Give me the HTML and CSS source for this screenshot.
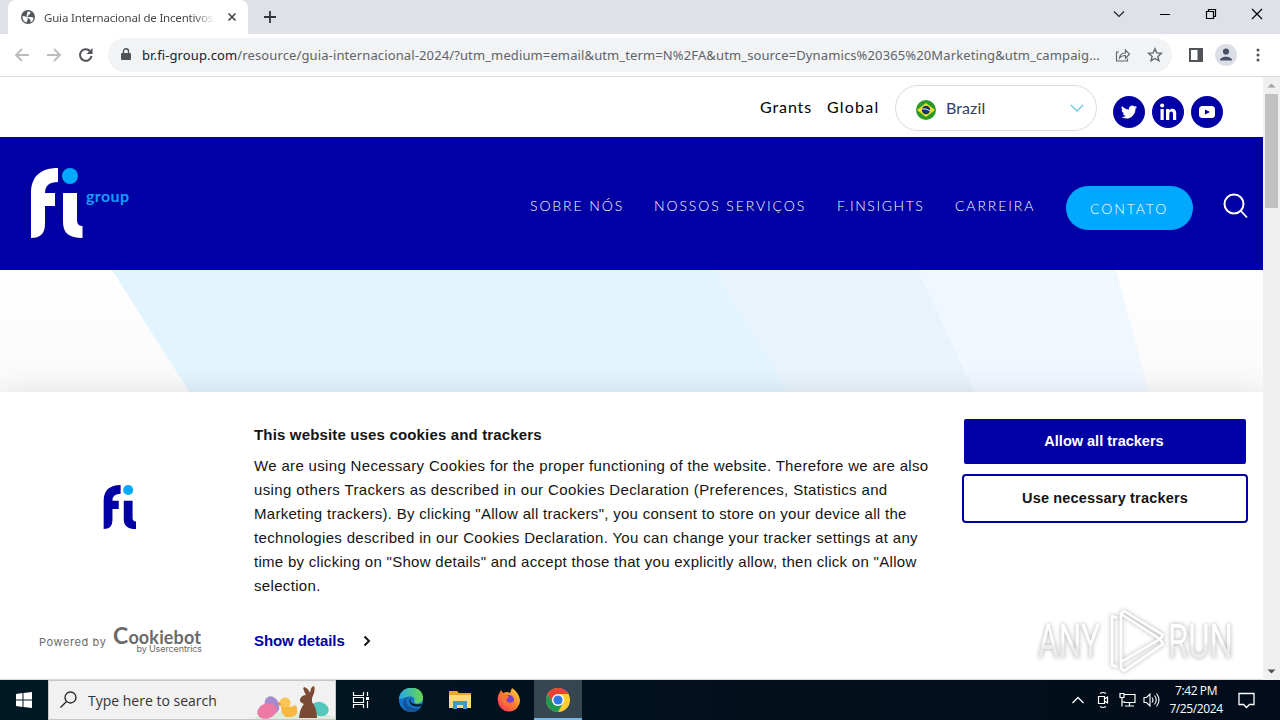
FILE: index.html
```html
<!DOCTYPE html>
<html lang="pt">
<head>
    <meta charset="UTF-8">
    <meta name="viewport" content="width=device-width, initial-scale=1.0">
    <title>Guia Internacional de Incentivos</title>
    <link rel="stylesheet" href="styles.css">
</head>
<body>
    <!-- Browser tabs -->
    <div class="tabstrip">
        <div class="tab">
            <svg class="globe" width="14" height="14" viewBox="0 0 14 14"><circle cx="7" cy="7" r="7" fill="#53575b"/><path d="M1.500 6l3 .5L7 8l-.5 2-1 2.500C3 12 1.500 10 1.500 6zM6.500 1.500l3 .5-.5 2-1.500 1-1 2H10l2.500.5C12.500 10 11 12 9.500 12.300L9.500 10 8 8.500 5.500 6.500z" fill="#fff"/></svg>
            <span class="tab-title">Guia Internacional de Incentivos</span>
            <svg width="10" height="10" viewBox="0 0 10 10"><path d="M1.500 1.500l7 7m0-7l-7 7" stroke="#45494d" stroke-width="1.700"/></svg>
        </div>
        <svg class="new-tab" width="12" height="12" viewBox="0 0 12 12"><path d="M6 0v12M0 6h12" stroke="#30343a" stroke-width="1.800"/></svg>
        <div class="window-buttons">
            <svg width="12" height="12" viewBox="0 0 12 12"><path d="M1 3.500l5 5 5-5" fill="none" stroke="#222" stroke-width="1.200"/></svg>
            <svg width="12" height="12" viewBox="0 0 12 12"><path d="M1 6.500h10" stroke="#000"/></svg>
            <svg width="12" height="12" viewBox="0 0 12 12"><path d="M1.500 3.500h7v7h-7zM3.500 3.500v-2h7v7h-2" fill="none" stroke="#000" stroke-width="1.200"/></svg>
            <svg width="12" height="12" viewBox="0 0 12 12"><path d="M1 1l10 10M11 1L1 11" stroke="#000" stroke-width="1.200"/></svg>
        </div>
    </div>

    <!-- Address bar -->
    <div class="toolbar">
        <div class="nav-buttons">
            <svg width="16" height="16" viewBox="0 0 16 16"><path d="M15 8H2m6-6L2 8l6 6" fill="none" stroke="#b9bbbd" stroke-width="1.800"/></svg>
            <svg width="16" height="16" viewBox="0 0 16 16"><path d="M1 8h13M8 2l6 6-6 6" fill="none" stroke="#b9bbbd" stroke-width="1.800"/></svg>
            <svg width="16" height="16" viewBox="0 0 16 16"><path d="M13.500 9A5.800 5.800 0 1 1 12 4" fill="none" stroke="#505458" stroke-width="2"/><path d="M14.500 1v6h-6z" fill="#505458"/></svg>
        </div>
        <div class="omnibox">
            <svg width="10" height="13" viewBox="0 0 10 13"><path d="M1 5h8q1 0 1 1v5q0 1-1 1H1q-1 0-1-1V6q0-1 1-1z" fill="#505458"/><path d="M2.500 5V3.200a2.500 2.500 0 0 1 5 0V5" fill="none" stroke="#505458" stroke-width="1.400"/></svg>
            <span class="url"><b>br.fi-group.com</b>/resource/guia-internacional-2024/?utm_medium=email&amp;utm_term=N%2FA&amp;utm_source=Dynamics%20365%20Marketing&amp;utm_campaig...</span>
            <svg width="16" height="16" viewBox="0 0 16 16"><path d="M4 5H1.500v9h11V11.500M4.500 11c.5-4 3-5 6-5V3l4 4.200-4 4V8.500c-3 0-4.500.5-6 2.500z" fill="none" stroke="#64686c" stroke-width="1.200"/></svg>
            <svg width="16" height="16" viewBox="0 0 16 16"><path d="M8 1.800l1.800 4.100 4.600.4-3.500 3.100 1 4.500L8 11.500l-3.900 2.400 1-4.500-3.500-3.100 4.600-.4z" fill="none" stroke="#64686c" stroke-width="1.400"/></svg>
        </div>
        <div class="tool-buttons">
            <svg width="14" height="14" viewBox="0 0 14 14"><path d="M1 1h12v12H1z" fill="none" stroke="#505458" stroke-width="2"/><path d="M8.500 1H13v12H8.500z" fill="#505458"/></svg>
            <svg width="22" height="22" viewBox="0 0 22 22"><circle cx="11" cy="11" r="11" fill="#dcdee6"/><circle cx="11" cy="7.500" r="3.100" fill="#4b5069"/><path d="M5 16.500c0-5 12-5 12 0z" fill="#4b5069"/></svg>
            <svg width="4" height="14" viewBox="0 0 4 14" fill="#505458"><circle cx="2" cy="2" r="1.500"/><circle cx="2" cy="7" r="1.500"/><circle cx="2" cy="12" r="1.500"/></svg>
        </div>
    </div>

    <div class="viewport">
        <div class="page">
            <div class="topbar">
                <a class="grants">Grants</a>
                <a class="global">Global</a>
                <div class="country">
                    <svg width="20" height="20" viewBox="0 0 20 20"><circle cx="10" cy="10" r="10" fill="#2b9b28"/><path d="M10 3l9 7-9 7-9-7z" fill="#f0df2f"/><circle cx="10" cy="10" r="4.200" fill="#18346f"/><path d="M6 9q4-1 8 2" fill="none" stroke="#e9f0ef"/></svg>
                    <span>Brazil</span>
                    <svg width="14" height="8" viewBox="0 0 14 8"><path d="M1 1l6 6 6-6" fill="none" stroke="#6fc6eb" stroke-width="1.400"/></svg>
                </div>
                <div class="social">
                    <svg width="32" height="32" viewBox="0 0 32 32"><circle cx="16" cy="16" r="16" fill="#0000a4"/><g transform="translate(8 8) scale(.67)"><path d="M23.950 4.570a10 10 0 0 1-2.820.78 4.960 4.960 0 0 0 2.160-2.730 9.900 9.900 0 0 1-3.130 1.190 4.920 4.920 0 0 0-8.390 4.490A13.970 13.970 0 0 1 1.640 3.160a4.920 4.920 0 0 0 1.520 6.570 4.900 4.900 0 0 1-2.230-.61v.06a4.920 4.920 0 0 0 3.950 4.830 5 5 0 0 1-2.220.08 4.940 4.940 0 0 0 4.600 3.420A9.870 9.870 0 0 1 0 19.540a13.940 13.940 0 0 0 7.550 2.210c9.050 0 14-7.500 14-13.980 0-.21 0-.42-.02-.63a9.940 9.940 0 0 0 2.420-2.570z" fill="#fff"/></g></svg>
                    <svg width="32" height="32" viewBox="0 0 32 32"><circle cx="16" cy="16" r="16" fill="#0000a4"/><path d="M8.500 13h3.200v11H8.500zM14 13h3.200v1.600c1.500-2.800 7-2.500 7 2.400v7H21v-6c0-3.400-3.700-3-3.700 0v6H14z" fill="#fff"/><circle cx="10.100" cy="9.500" r="2" fill="#fff"/></svg>
                    <svg width="32" height="32" viewBox="0 0 32 32"><circle cx="16" cy="16" r="16" fill="#0000a4"/><rect x="8" y="10" width="16" height="12" rx="3.500" fill="#fff"/><path d="M14 13.500v5l5-2.500z" fill="#0000a4"/></svg>
                </div>
            </div>

            <div class="header">
                <div class="brand">
                    <svg width="52" height="70" viewBox="0 0 52 70"><path d="M0 70V25C0 8 10 0 27 0v14q-13 0-13 11h10v13H14v18q0 14-14 14zM32 25h14v27q0 6 5.500 6v12C38 70 32 65 32 54z" fill="#fff"/><circle cx="39" cy="8" r="8" fill="#00a8ff"/></svg>
                    <span>group</span>
                </div>
                <div class="menu">
                    <a class="m1">SOBRE NÓS</a>
                    <a class="m2">NOSSOS SERVIÇOS</a>
                    <a class="m3">F.INSIGHTS</a>
                    <a class="m4">CARREIRA</a>
                    <a class="contact"><span>CONTATO</span></a>
                    <svg width="26" height="26" viewBox="0 0 26 26"><circle cx="11" cy="11" r="9.500" fill="none" stroke="#fff" stroke-width="2"/><path d="M18 18l6 6.500" stroke="#fff" stroke-width="1.800"/></svg>
                </div>
            </div>

            <div class="hero">
                <svg width="1263" height="123" viewBox="0 0 1263 123"><path d="M112 0h602l75 123H190z" fill="#e2f4fe"/><path d="M714 0h204l57 123H789z" fill="#e8f3fc"/><path d="M918 0h198l33 123H975z" fill="#f0f7fe"/></svg>
            </div>

            <!-- Cookie banner -->
            <div class="cookies">
                <div class="cookie-left">
                    <svg class="cookie-logo" width="34" height="44" viewBox="0 0 52 70"><path d="M0 70V25C0 8 10 0 27 0v14q-13 0-13 11h10v13H14v18q0 14-14 14zM32 25h14v27q0 6 5.500 6v12C38 70 32 65 32 54z" fill="#0000a4"/><circle cx="39" cy="8" r="8" fill="#00a8ff"/></svg>
                    <div class="powered">
                        <span>Powered by</span>
                        <div class="cookiebot"><strong><i>C</i>ookiebot</strong><small>by Usercentrics</small></div>
                    </div>
                </div>
                <div class="cookie-text">
                    <h2>This website uses cookies and trackers</h2>
                    <p>
                        <span class="l1">We are using Necessary Cookies for the proper functioning of the website. Therefore we are also</span>
                        <span class="l2">using others Trackers as described in our Cookies Declaration (Preferences, Statistics and</span>
                        <span class="l3">Marketing trackers). By clicking "Allow all trackers", you consent to store on your device all the</span>
                        <span class="l4">technologies described in our Cookies Declaration. You can change your tracker settings at any</span>
                        <span class="l5">time by clicking on "Show details" and accept those that you explicitly allow, then click on "Allow</span>
                        <span class="l6">selection.</span>
                    </p>
                    <a class="details">Show details <svg width="8" height="12" viewBox="0 0 8 12"><path d="M1.500 1.500L6 6l-4.500 4.500" fill="none" stroke="#141414" stroke-width="2"/></svg></a>
                </div>
                <div class="cookie-buttons">
                    <button class="allow">Allow all trackers</button>
                    <button class="necessary">Use necessary trackers</button>
                </div>
            </div>
        </div>
        <div class="scrollbar">
            <svg width="17" height="17" viewBox="0 0 17 17"><path d="M4.500 10.500l4-4 4 4z" fill="#a3a3a3"/></svg>
            <div class="thumb"></div>
            <svg class="down" width="17" height="17" viewBox="0 0 17 17"><path d="M4.500 6.500l4 4 4-4z" fill="#505050"/></svg>
        </div>
    </div>

    <!-- Windows taskbar -->
    <div class="taskbar">
        <div class="start"><svg width="16" height="16" viewBox="0 0 16 16" fill="#fff"><path d="M0 2l6.500-1v6.500H0zM7.500 1L16 0v7.500H7.500zM0 8.500h6.500V15L0 14zM7.500 8.500H16V16l-8.500-1z"/></svg></div>
        <div class="search">
            <svg width="18" height="18" viewBox="0 0 18 18"><circle cx="10.500" cy="6.500" r="5.500" fill="none" stroke="#222" stroke-width="1.300"/><path d="M6.500 10.500L.5 16.500" stroke="#222" stroke-width="1.300"/></svg>
            <span>Type here to search</span>
            <svg class="easter" width="80" height="38" viewBox="0 0 80 38">
                <path d="M0 36q38-12 80 0v2H0z" fill="#dcebdc"/>
                <ellipse cx="17" cy="24" rx="7" ry="9" fill="#a58bd0" transform="rotate(-25 17 24)"/>
                <ellipse cx="12" cy="30" rx="10" ry="7.500" fill="#ed79a5" transform="rotate(-18 12 30)"/>
                <circle cx="30" cy="22" r="5.500" fill="#fac653"/><path d="M26 25q6 3 15-1 4 11-5 12-10 2-10-11z" fill="#f8b83f"/><path d="M25 21l-3 2 4 1.500z" fill="#ec8437"/>
                <ellipse cx="65" cy="28" rx="9" ry="7" fill="#53c8bd" transform="rotate(20 65 28)"/>
                <path d="M51 14Q47 7 49 6q4 1 6 6 1-7 4-7 2 4-2 12l0 4q5 6 5 16H44q1-10 5-14-5-2-4-5 2-4 6-4z" fill="#7a4a35"/>
            </svg>
        </div>
        <div class="apps">
            <div class="app"><svg width="18" height="18" viewBox="0 0 18 18"><path d="M1.500 1v3.500h10V1M1.500 17v-3.500h10V17M1.500 6.500h10v5h-10zM15.500 1v4M15.500 10v7" fill="none" stroke="#fff" stroke-width="1.200"/><path d="M14 6h3v3h-3z" fill="#fff"/></svg></div>
            <div class="app"><svg width="24" height="24" viewBox="0 0 24 24">
                <defs><linearGradient id="edge" x1="0" x2="1"><stop offset="0" stop-color="#24a8e8"/><stop offset="1" stop-color="#6bd94b"/></linearGradient></defs>
                <circle cx="12" cy="12" r="12" fill="#1674c8"/><path d="M0 11C1-4 24-4 24 10c0 6-8 7-9 4 2-5-3-7-7-5-4 1-7 2-8 2z" fill="url(#edge)"/><path d="M9 9c-5 5 0 13 13 11-6 6-15 5-17-1-2-5 0-9 4-10z" fill="#12539d"/><path d="M12 10c-2 3 0 8 11 6l-1 2c-4 1-9 1-11-3-1-2-1-4 1-5z" fill="#001823"/></svg></div>
            <div class="app"><svg width="22" height="20" viewBox="0 0 22 20"><path d="M0 1h8l2 2h12v15H0z" fill="#e9a929"/><path d="M0 5h22v13H0z" fill="#fbdc79"/><path d="M4 11h14v8h-4v-4H8v4H4z" fill="#3e99cf"/></svg></div>
            <div class="app"><svg width="24" height="24" viewBox="0 0 24 24">
                <defs><linearGradient id="fox" x1="1" y1="0" x2="0" y2="1"><stop offset="0" stop-color="#ffe03d"/><stop offset=".5" stop-color="#ff7b2d"/><stop offset="1" stop-color="#f32c65"/></linearGradient></defs>
                <path d="M2 6l2-4 2 3q4-2 7 0l2-5q7 5 8 12a11 11 0 0 1-22 1q-1-4 1-7z" fill="url(#fox)"/><circle cx="12" cy="12" r="5" fill="#7541c8"/><path d="M5 8q5-2 7 1l-3 3q3 5 8 1-1 6-7 5-6-2-5-10z" fill="#ff7134"/></svg></div>
            <div class="app active"><svg width="24" height="24" viewBox="0 0 24 24"><circle cx="12" cy="12" r="12" fill="#ffcd34"/><path d="M1.600 6A12 12 0 0 1 22.400 6H12L7 15z" fill="#ea4335"/><path d="M1.600 6A12 12 0 0 0 12 24l5.200-9L7 15z" fill="#219653"/><circle cx="12" cy="12" r="6" fill="#fff"/><circle cx="12" cy="12" r="4.600" fill="#2e77e5"/></svg></div>
        </div>
        <div class="tray">
            <svg width="12" height="8" viewBox="0 0 12 8"><path d="M.5 7L6 1.500 11.500 7" fill="none" stroke="#fff" stroke-width="1.300"/></svg>
            <svg width="12" height="18" viewBox="0 0 12 18"><path d="M1.500 5.500h6v7h-6zM7.500 8l3-2v6l-3-2M3 2.500q3-2 6 0M3 15.500q3 2 6 0" fill="none" stroke="#fff" stroke-width="1.200"/></svg>
            <svg width="17" height="16" viewBox="0 0 17 16"><path d="M5 2.500h11v8H5M1 1.500h4v4H1zM3 5.500v9M3 10h3M10.500 10.500v3M6 14h9" fill="none" stroke="#fff" stroke-width="1.200"/></svg>
            <svg width="17" height="16" viewBox="0 0 17 16"><path d="M1 5.500h2.500L7 2v12l-3.500-3.500H1zM9 5.500q2 2.500 0 5M11.500 3.500q3.500 4.500 0 9M13.500 1.500q5 6.500 0 13" fill="none" stroke="#fff" stroke-width="1.100"/></svg>
            <div class="clock"><span>7:42 PM</span><span>7/25/2024</span></div>
            <svg width="17" height="17" viewBox="0 0 17 17"><path d="M1 1.500h15v11h-4.500l-3 3-3-3H1z" fill="none" stroke="#fff" stroke-width="1.300"/></svg>
        </div>
    </div>

    <svg class="watermark" width="204" height="72" viewBox="0 0 204 72">
        <defs><linearGradient id="shade" x1="0" y1="0" x2="0" y2="1"><stop offset=".5" stop-color="#fff"/><stop offset=".6" stop-color="#ececec"/></linearGradient></defs>
        <g class="mark-text" fill="url(#shade)"><text x="4" y="54" textLength="62" lengthAdjust="spacingAndGlyphs">ANY</text><text x="134" y="54" textLength="65" lengthAdjust="spacingAndGlyphs">RUN</text></g>
        <path class="mark-icon" d="M87 10v48l39-23zM83 14l-5-2v49l5 2M87 10l3-3 39 24-3 4M87 58v6l3 3 39-27-3-5"/>
    </svg>
</body>
</html>
```
FILE: styles.css
```css
* {
    box-sizing: border-box;
}

body {
    margin: 0;
    width: 1280px;
    height: 720px;
    overflow: hidden;
    background-color: #fff;
    font-family: "Liberation Sans", Arial, sans-serif;
    display: flex;
    flex-direction: column;
}

svg {
    display: block;
    flex-shrink: 0;
}

span, a {
    white-space: nowrap;
}

/* Browser */
.tabstrip {
    height: 34px;
    flex-shrink: 0;
    padding-left: 8px;
    background-color: #dee1e7;
    display: flex;
}

.tab {
    width: 240px;
    padding: 0 11px 0 13px;
    background-color: #fff;
    border-radius: 8px 8px 0 0;
    display: flex;
    align-items: center;
}

.tab-title {
    width: 171px;
    margin: 0 12px 0 9px;
    overflow: hidden;
    font-family: "Noto Sans", sans-serif;
    font-size: 11.5px;
    letter-spacing: -.18px;
    color: #45484c;
    -webkit-mask-image: linear-gradient(90deg, #000 150px, transparent);
}

.new-tab {
    margin: 11px 0 0 16px;
}

.window-buttons {
    margin: 8px 17px 0 auto;
    display: flex;
    gap: 34px;
}

.toolbar {
    height: 43px;
    flex-shrink: 0;
    border-bottom: 1px solid #d9dadc;
    padding: 0 20px 1px 14px;
    display: flex;
    align-items: center;
}

.nav-buttons {
    width: 94px;
    display: flex;
    gap: 16px;
}

.omnibox {
    width: 1064px;
    height: 34px;
    padding: 0 10px 0 13px;
    border-radius: 17px;
    background-color: #f1f3f4;
    display: flex;
    align-items: center;
    gap: 16px;
}

.url {
    width: 962px;
    margin: 0 -1px 0 -5px;
    font-family: "Noto Sans", sans-serif;
    font-size: 13px;
    letter-spacing: .12px;
    color: #5f6368;
}

.url b {
    font-weight: normal;
    color: #202124;
}

.tool-buttons {
    margin-left: auto;
    display: flex;
    align-items: center;
    gap: 14px;
}

.tool-buttons svg:first-child {
    margin-right: -2px;
}

.tool-buttons svg:last-child {
    margin-left: 5px;
}

.viewport {
    height: 603px;
    display: flex;
}

.page {
    width: 1263px;
    display: flex;
    flex-direction: column;
}

/* Site header */
.topbar {
    height: 60px;
    padding: 8px 40px 0 760px;
    display: flex;
    align-items: flex-start;
    font-family: Lato, sans-serif;
    font-size: 16px;
    line-height: 44px;
}

.grants {
    width: 67px;
    letter-spacing: .9px;
}

.global {
    width: 68px;
    letter-spacing: 1.2px;
}

.country {
    width: 202px;
    height: 46px;
    padding: 3px 12px 0 20px;
    border: 1px solid #ddd8e4;
    border-radius: 23px;
    color: #34405a;
    display: flex;
    align-items: center;
}

.country span {
    width: 124px;
    margin: -3px 0 0 10px;
    letter-spacing: .1px;
}

.country svg:last-child {
    margin: -3px 0 0;
}

.social {
    margin: 11px 0 0 16px;
    display: flex;
    gap: 7px;
}

.header {
    height: 133px;
    background-color: #0000a4;
    color: #fff;
    display: flex;
    justify-content: space-between;
}

.brand {
    padding: 31px 0 0 31px;
    display: flex;
}

.brand span {
    margin: 17px 0 0 3px;
    color: #149dff;
    font-family: Lato, sans-serif;
    font-size: 16px;
    font-weight: bold;
    letter-spacing: .4px;
    line-height: 22px;
}

.menu {
    width: 733px;
    height: 44px;
    margin-top: 49px;
    display: flex;
    font-family: Lato, sans-serif;
    font-size: 14px;
    font-weight: 300;
    letter-spacing: 1.9px;
    line-height: 40px;
}

.m1 {
    width: 124px;
}

.m2 {
    width: 183px;
}

.m3 {
    width: 118px;
    letter-spacing: 1.6px;
}

.m4 {
    width: 111px;
}

.contact {
    width: 127px;
    height: 44px;
    padding-left: 24px;
    border-radius: 22px;
    background-color: #00a8ff;
    line-height: 46px;
}

.menu svg {
    margin: 7px 0 0 30px;
}

.hero {
    height: 122px;
    overflow: hidden;
    background: linear-gradient(#fff, #fafafa);
}

/* Cookie banner */
.cookies {
    position: relative;
    height: 288px;
    border-bottom: 1px solid #d3dbe2;
    background-color: #fff;
    box-shadow: 0 0 28px rgba(0, 0, 0, 0.1);
    display: flex;
    clip-path: inset(-30px 0 0 0);
}

.cookie-left {
    width: 254px;
    padding-top: 93px;
}

.cookie-logo {
    margin-left: 103px;
}

.powered {
    margin: 95px 0 0 39px;
    display: flex;
    color: #6a6a6a;
    font-family: Inter, sans-serif;
    font-size: 11px;
    letter-spacing: .6px;
}

.powered > span {
    width: 74px;
    padding-top: 11px;
    line-height: 14px;
}

.cookiebot {
    width: 89px;
    padding-top: 2px;
    display: flex;
    flex-direction: column;
}

.cookiebot strong {
    height: 18px;
    font-family: Lato, sans-serif;
    font-size: 18px;
    line-height: 20px;
    letter-spacing: .15px;
    white-space: nowrap;
    color: #6a6a6a;
    font-weight: bold;
}

.cookiebot i {
    font-style: normal;
    font-size: 23px;
    line-height: 18px;
}

.cookiebot small {
    font-size: 9px;
    line-height: 10px;
    letter-spacing: -.1px;
    text-align: right;
}

.cookie-text {
    width: 708px;
    padding-top: 32px;
    color: #141414;
}

.cookie-text h2 {
    margin: 0 0 9px;
    font-size: 15px;
    line-height: 21px;
    letter-spacing: .16px;
}

.cookie-text p {
    margin: 0;
    font-size: 15px;
    line-height: 24px;
    letter-spacing: .33px;
}

.cookie-text p span {
    display: block;
}

.cookie-text .l2 {
    letter-spacing: .37px;
}

.cookie-text .l3, .cookie-text .l5 {
    letter-spacing: .29px;
}

.details {
    margin-top: 33px;
    display: flex;
    align-items: center;
    gap: 18px;
    color: #0000a4;
    font-size: 15px;
    font-weight: bold;
    line-height: 20px;
    letter-spacing: -.08px;
}

.cookie-buttons {
    width: 286px;
    padding-top: 27px;
    display: flex;
    flex-direction: column;
    align-items: center;
}

.cookie-buttons button {
    border: 2px solid #0000a4;
    border-radius: 4px;
    padding: 0 0 2px;
    font-family: inherit;
    font-size: 14.5px;
    font-weight: bold;
    letter-spacing: .18px;
}

.cookie-buttons .allow {
    width: 282px;
    height: 45px;
    margin-bottom: 10px;
    padding-right: 2px;
    border-radius: 2px;
    background-color: #0000a4;
    color: #fff;
    letter-spacing: 0;
}

.cookie-buttons .necessary {
    width: 286px;
    height: 49px;
    background-color: #fff;
    color: #141414;
}

.scrollbar {
    width: 17px;
    background-color: #f0f0f0;
    display: flex;
    flex-direction: column;
}

.thumb {
    width: 13px;
    height: 114px;
    margin-left: 2px;
    background-color: #c1c1c1;
}

.down {
    margin-top: auto;
}

/* Taskbar */
.taskbar {
    height: 40px;
    flex-shrink: 0;
    background: linear-gradient(90deg, #001823, #02101c 60%, #030c1a);
    color: #fff;
    display: flex;
    font-family: "Open Sans", sans-serif;
}

.start {
    width: 48px;
    display: flex;
    align-items: center;
    justify-content: center;
}

.search {
    width: 288px;
    height: 40px;
    padding-left: 11px;
    border: 1px solid #c5c7c8;
    background-color: #f1f1f1;
    color: #333;
    font-size: 14px;
    display: flex;
    align-items: center;
}

.search span {
    width: 165px;
    margin-left: 10px;
}

.easter {
    margin-left: 4px;
}

.apps {
    display: flex;
}

.app {
    width: 49px;
    display: flex;
    align-items: center;
    justify-content: center;
}

.app:first-child {
    width: 50px;
}

.active {
    width: 48px;
    margin-left: 1px;
    padding-top: 2px;
    background-color: #364650;
    border-bottom: 2px solid #76b9ed;
}

.tray {
    margin-left: auto;
    padding-right: 25px;
    display: flex;
    align-items: center;
    gap: 13px;
}

.tray svg:nth-child(3) {
    margin-left: -3px;
}

.tray svg:nth-child(4) {
    margin-left: -6px;
}

.clock {
    width: 54px;
    margin-left: -4px;
    display: flex;
    flex-direction: column;
    align-items: center;
    font-size: 12px;
    line-height: 18px;
    letter-spacing: -.4px;
}

.tray > svg:last-child {
    margin-left: 2px;
}

/* Overlay mark in the corner */
.watermark {
    position: absolute;
    left: 1034px;
    top: 604px;
    filter: drop-shadow(0 0 2px #aaa);
}

.mark-text {
    font-family: Roboto, sans-serif;
    font-size: 48px;
}

.mark-icon {
    fill: none;
    stroke: #fff;
    stroke-width: 2.5px;
    stroke-linejoin: round;
}
```
